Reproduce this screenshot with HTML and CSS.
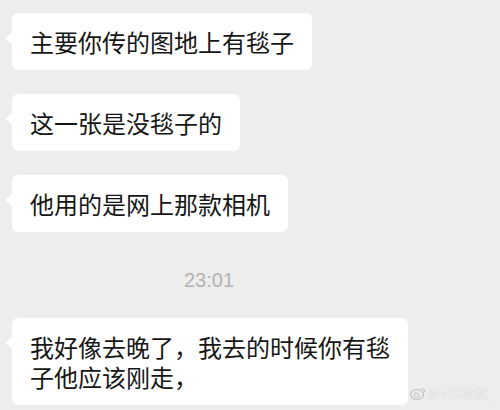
FILE: index.html
```html
<!DOCTYPE html>
<html lang="zh-CN">
<head>
  <meta charset="UTF-8" />
  <meta name="viewport" content="width=device-width, initial-scale=1.0"/>
  <title>聊天记录</title>
  <link rel="stylesheet" href="styles.css">
</head>
<body>
  <main class="chat">
    <div class="msg"><div class="bubble">主要你传的图地上有毯子</div></div>
    <div class="msg"><div class="bubble">这一张是没毯子的</div></div>
    <div class="msg"><div class="bubble">他用的是网上那款相机</div></div>

    <div class="time">23:01</div>

    <div class="msg"><div class="bubble">我好像去晚了，我去的时候你有毯子他应该刚走，</div></div>
  </main>

  <!-- weibo watermark -->
  <div class="watermark">
    <svg width="16" height="14" viewBox="0 0 16 14">
      <ellipse cx="7" cy="8.5" rx="6.5" ry="4.8" fill="none" stroke="#c4c4c4" stroke-width="1.2"/>
      <ellipse cx="6.5" cy="9" rx="2.6" ry="2" fill="none" stroke="#c4c4c4" stroke-width="1"/>
      <path d="M11 2.5 A3 3 0 0 1 14.5 6" fill="none" stroke="#c4c4c4" stroke-width="1.1"/>
    </svg>
    <span>@老轩叔叔_</span>
  </div>
</body>
</html>
```

FILE: styles.css
```css
body { margin: 0; background: #ededed; font-family: "Noto Sans CJK SC", "Noto Sans", sans-serif; }
.chat { padding: 13px 0 0 12px; display: flex; flex-direction: column; gap: 24px; }
.msg { display: flex; }
.bubble { position: relative; background: #fff; color: #161616; font-size: 24px; line-height: 30px; padding: 13.5px 18px; border-radius: 6px; max-width: 396px; box-sizing: border-box; }
.bubble::before { content: ""; position: absolute; left: -7px; top: 19px; border-style: solid; border-width: 6px 7px 6px 0; border-color: transparent #fff transparent transparent; }
.time { width: 394px; text-align: center; color: #b3b3b3; font-family: "Liberation Sans", Arial, sans-serif; font-size: 20px; line-height: 24px; margin: 12px 0 2px; }
.watermark { position: absolute; right: 6px; top: 384px; display: flex; align-items: center; gap: 2px; font-size: 12px; color: #f4f4f4; text-shadow: 0 0 1px #b8b8b8; }
```
